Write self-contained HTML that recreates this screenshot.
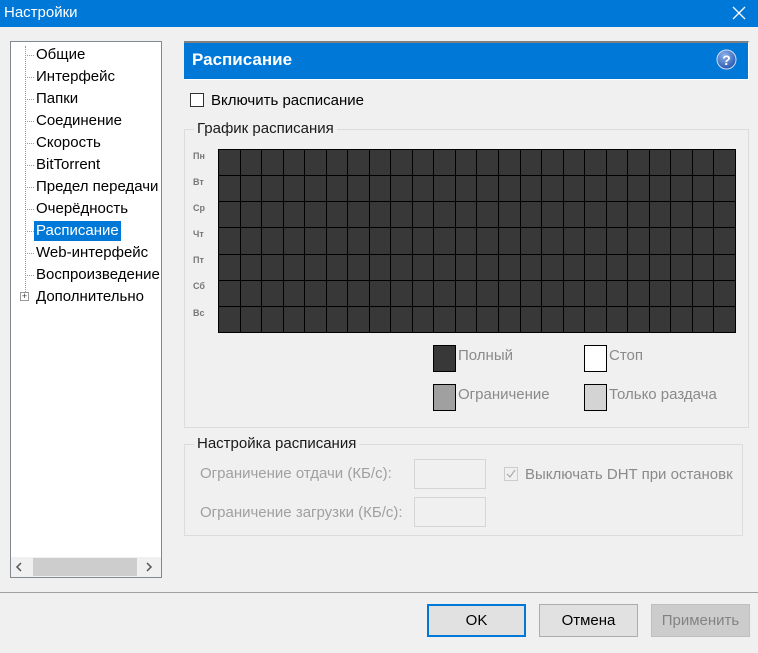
<!DOCTYPE html>
<html><head><meta charset="utf-8"><style>
*{margin:0;padding:0;box-sizing:border-box}
body{width:758px;height:653px;background:#f0f0f0;font-family:"Liberation Sans",sans-serif;font-size:15px;color:#000;position:relative;overflow:hidden}
.a{position:absolute;white-space:nowrap}
#title{left:0;top:0;width:758px;height:27px;background:#0078d7;color:#fff;font-size:15px;line-height:26px;padding-left:4px}
#tree{left:10px;top:41px;width:152px;height:537px;background:#fff;border:1px solid #828790;overflow:hidden}
.it{position:absolute;left:25px;font-size:15px;line-height:20px}
.dot{position:absolute;left:14px;width:9px;border-top:1px dotted #999}
#hdr{left:184px;top:41px;width:565px;height:39px;background:#0078d7;border-top:2px solid #808080;border-right:1px solid #fff;border-bottom:1px solid #fff;color:#fff;font-weight:bold;font-size:17px;line-height:33px;padding-left:8px}
.grp{border:1px solid #dcdcdc}
.lg{background:#f0f0f0;padding:0 3px;font-size:15px;color:#1a1a1a}
#grid{left:218px;top:149px;width:518px;height:184px;background:#000;padding:1px;display:grid;grid-template-columns:repeat(24,1fr);grid-template-rows:repeat(7,1fr);gap:1px}
#grid div{background:#383838}
.day{left:193px;font-size:9px;color:#777;font-weight:bold}
.sw{width:23px;height:27px;border:1px solid #000}
.gt{color:#8a8a8a;font-size:15px}
.inp{width:72px;height:30px;border:1px solid #d5d5d5;background:#f0f0f0}
.btn{top:604px;width:99px;height:33px;border:1px solid #adadad;background:#e1e1e1;text-align:center;line-height:31px;font-size:15px}
</style></head><body>
<div class="a" id="title">Настройки</div>
<svg class="a" style="left:732px;top:6px" width="14" height="14"><path d="M1 1L13 13M13 1L1 13" stroke="#fff" stroke-width="1.3"/></svg>

<div class="a" id="tree">
<div style="position:absolute;left:14px;top:4px;height:252px;border-left:1px dotted #999"></div>
<div class="dot" style="top:13px"></div><div class="it" style="top:3px">Общие</div>
<div class="dot" style="top:35px"></div><div class="it" style="top:25px">Интерфейс</div>
<div class="dot" style="top:57px"></div><div class="it" style="top:47px">Папки</div>
<div class="dot" style="top:79px"></div><div class="it" style="top:69px">Соединение</div>
<div class="dot" style="top:101px"></div><div class="it" style="top:91px">Скорость</div>
<div class="dot" style="top:123px"></div><div class="it" style="top:113px">BitTorrent</div>
<div class="dot" style="top:145px"></div><div class="it" style="top:135px">Предел передачи</div>
<div class="dot" style="top:167px"></div><div class="it" style="top:157px">Очерёдность</div>
<div class="dot" style="top:189px"></div><div class="it" style="top:179px;left:23px;background:#0078d7;color:#fff;padding:0 2px">Расписание</div>
<div class="dot" style="top:211px"></div><div class="it" style="top:201px">Web-интерфейс</div>
<div class="dot" style="top:233px"></div><div class="it" style="top:223px">Воспроизведение</div>
<div style="position:absolute;left:9px;top:250px;width:9px;height:9px;border:1px solid #999;background:#fff;font-size:9px;line-height:7px;text-align:center;color:#333">+</div>
<div class="it" style="top:245px">Дополнительно</div>
<div style="position:absolute;left:0;bottom:0;width:150px;height:20px;background:#f0f0f0"></div>
<div style="position:absolute;left:22px;bottom:1px;width:104px;height:18px;background:#cdcdcd"></div>
<svg style="position:absolute;left:4px;bottom:5px" width="8" height="10"><path d="M6 1L2 5L6 9" stroke="#555" stroke-width="1.5" fill="none"/></svg>
<svg style="position:absolute;left:134px;bottom:5px" width="8" height="10"><path d="M2 1L6 5L2 9" stroke="#555" stroke-width="1.5" fill="none"/></svg>
</div>

<div class="a" id="hdr">Расписание</div>
<svg class="a" style="left:716px;top:49px" width="21" height="21"><defs><radialGradient id="g" cx="40%" cy="30%" r="70%"><stop offset="0" stop-color="#8fb4ea"/><stop offset="1" stop-color="#2a58b0"/></radialGradient></defs><circle cx="10.5" cy="10.5" r="9.5" fill="url(#g)" stroke="#d0def5"/><text x="10.5" y="16" font-size="14" font-weight="bold" fill="#fff" text-anchor="middle" font-family="Liberation Sans">?</text></svg>

<div class="a" style="left:190px;top:93px;width:14px;height:14px;border:1px solid #333;background:#fff"></div>
<div class="a" style="left:211px;top:92px">Включить расписание</div>

<div class="a grp" style="left:184px;top:129px;width:565px;height:299px"></div>
<div class="a lg" style="left:194px;top:120px">График расписания</div>
<div class="a day" style="top:151px">Пн</div>
<div class="a day" style="top:177px">Вт</div>
<div class="a day" style="top:203px">Ср</div>
<div class="a day" style="top:229px">Чт</div>
<div class="a day" style="top:255px">Пт</div>
<div class="a day" style="top:281px">Сб</div>
<div class="a day" style="top:308px">Вс</div>
<div class="a" id="grid">
<div></div><div></div><div></div><div></div><div></div><div></div><div></div><div></div><div></div><div></div><div></div><div></div><div></div><div></div><div></div><div></div><div></div><div></div><div></div><div></div><div></div><div></div><div></div><div></div>
<div></div><div></div><div></div><div></div><div></div><div></div><div></div><div></div><div></div><div></div><div></div><div></div><div></div><div></div><div></div><div></div><div></div><div></div><div></div><div></div><div></div><div></div><div></div><div></div>
<div></div><div></div><div></div><div></div><div></div><div></div><div></div><div></div><div></div><div></div><div></div><div></div><div></div><div></div><div></div><div></div><div></div><div></div><div></div><div></div><div></div><div></div><div></div><div></div>
<div></div><div></div><div></div><div></div><div></div><div></div><div></div><div></div><div></div><div></div><div></div><div></div><div></div><div></div><div></div><div></div><div></div><div></div><div></div><div></div><div></div><div></div><div></div><div></div>
<div></div><div></div><div></div><div></div><div></div><div></div><div></div><div></div><div></div><div></div><div></div><div></div><div></div><div></div><div></div><div></div><div></div><div></div><div></div><div></div><div></div><div></div><div></div><div></div>
<div></div><div></div><div></div><div></div><div></div><div></div><div></div><div></div><div></div><div></div><div></div><div></div><div></div><div></div><div></div><div></div><div></div><div></div><div></div><div></div><div></div><div></div><div></div><div></div>
<div></div><div></div><div></div><div></div><div></div><div></div><div></div><div></div><div></div><div></div><div></div><div></div><div></div><div></div><div></div><div></div><div></div><div></div><div></div><div></div><div></div><div></div><div></div><div></div>
</div>

<div class="a sw" style="left:433px;top:345px;background:#383838"></div><div class="a gt" style="left:458px;top:347px">Полный</div>
<div class="a sw" style="left:584px;top:345px;background:#fff"></div><div class="a gt" style="left:609px;top:347px">Стоп</div>
<div class="a sw" style="left:433px;top:384px;background:#a0a0a0"></div><div class="a gt" style="left:458px;top:386px">Ограничение</div>
<div class="a sw" style="left:584px;top:384px;background:#d4d4d4"></div><div class="a gt" style="left:609px;top:386px">Только раздача</div>

<div class="a grp" style="left:184px;top:444px;width:559px;height:92px"></div>
<div class="a lg" style="left:194px;top:435px">Настройка расписания</div>
<div class="a gt" style="left:200px;top:465px;color:#a0a0a0">Ограничение отдачи (КБ/с):</div>
<div class="a gt" style="left:200px;top:504px;color:#a0a0a0">Ограничение загрузки (КБ/с):</div>
<div class="a inp" style="left:414px;top:459px"></div>
<div class="a inp" style="left:414px;top:497px"></div>
<div class="a" style="left:504px;top:467px;width:14px;height:14px;border:1px solid #ccc;background:#f0f0f0"></div>
<svg class="a" style="left:505px;top:468px" width="12" height="12"><path d="M2 6L5 9L10 2" stroke="#aaa" fill="none" stroke-width="1.2"/></svg>
<div class="a gt" style="left:525px;top:466px;color:#8a8a8a">Выключать DHT при остановк</div>

<div class="a" style="left:0;top:592px;width:758px;height:1px;background:#a0a0a0"></div>
<div class="a btn" style="left:427px;border:2px solid #0078d7;line-height:29px">OK</div>
<div class="a btn" style="left:539px">Отмена</div>
<div class="a btn" style="left:651px;background:#ccc;border-color:#bfbfbf;color:#838383">Применить</div>
</body></html>
